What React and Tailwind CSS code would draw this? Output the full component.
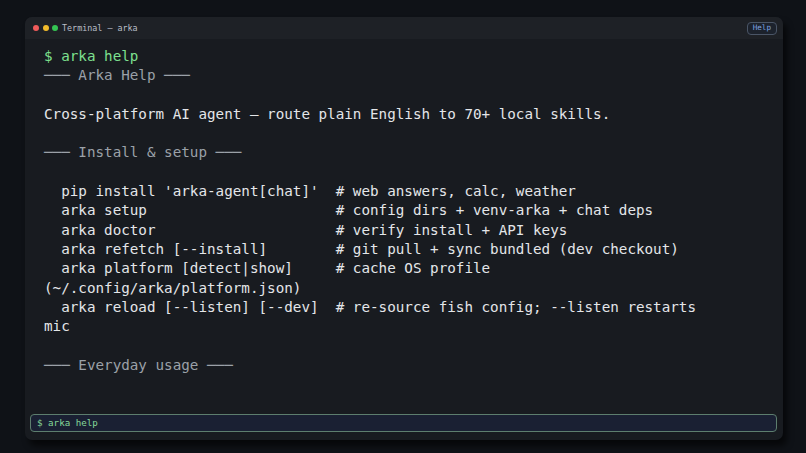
import React from 'react'

const mono = { fontFamily: '"DejaVu Sans Mono", "Liberation Mono", monospace' }

const lines = [
  { t: '$ arka help', c: 'text-[#7ee08f]' },
  { t: '─── Arka Help ───', c: 'text-[#9ba1a8]' },
  { t: '' },
  { t: 'Cross-platform AI agent — route plain English to 70+ local skills.' },
  { t: '' },
  { t: '─── Install & setup ───', c: 'text-[#9ba1a8]' },
  { t: '' },
  { t: "  pip install 'arka-agent[chat]'  # web answers, calc, weather" },
  { t: '  arka setup                      # config dirs + venv-arka + chat deps' },
  { t: '  arka doctor                     # verify install + API keys' },
  { t: '  arka refetch [--install]        # git pull + sync bundled (dev checkout)' },
  { t: '  arka platform [detect|show]     # cache OS profile' },
  { t: '(~/.config/arka/platform.json)' },
  { t: '  arka reload [--listen] [--dev]  # re-source fish config; --listen restarts' },
  { t: 'mic' },
  { t: '' },
  { t: '─── Everyday usage ───', c: 'text-[#9ba1a8]' },
]

export default function App() {
  return (
    <div className="w-[806px] h-[453px] bg-[#0f1217] pt-[17px] pl-[25px] overflow-hidden" style={mono}>
      <div className="w-[758px] h-[423px] rounded-[7px] bg-[#181b20] flex flex-col overflow-hidden shadow-[4px_6px_6px_rgba(0,0,0,0.6)]">
        {/* title bar */}
        <div className="h-[22px] bg-[#1e2126] flex items-center pl-[8px] pr-[6px]">
          <div className="flex items-center gap-[3.5px]">
            <span className="w-[6px] h-[6px] rounded-full bg-[#ef5b5b]" />
            <span className="w-[6px] h-[6px] rounded-full bg-[#f2bb2b]" />
            <span className="w-[6px] h-[6px] rounded-full bg-[#35c553]" />
          </div>
          <span className="ml-[4px] text-[8.4px] text-[#b9bec6]">Terminal — arka</span>
          <span className="ml-auto h-[13px] px-[5px] flex items-center rounded-[4px] border border-[#4a5566] text-[7.6px] text-[#7ea3e0] bg-[#1c222c]">
            Help
          </span>
        </div>
        {/* output */}
        <div className="flex-1 pl-[19px] pt-[8px] text-[14.25px] leading-[19.3px] text-[#e4e6e9]">
          {lines.map((l, i) => (
            <div key={i} className={'whitespace-pre h-[19.3px] ' + (l.c || '')}>
              {l.t}
            </div>
          ))}
        </div>
        {/* input */}
        <div className="mx-[5px] mb-[8px] mr-[6px] h-[18px] rounded-[4px] border border-[#5d7e6e] bg-[#1a2033] flex items-center pl-[6px] text-[9.2px] text-[#86d99a]">
          $ arka help
        </div>
      </div>
    </div>
  )
}
